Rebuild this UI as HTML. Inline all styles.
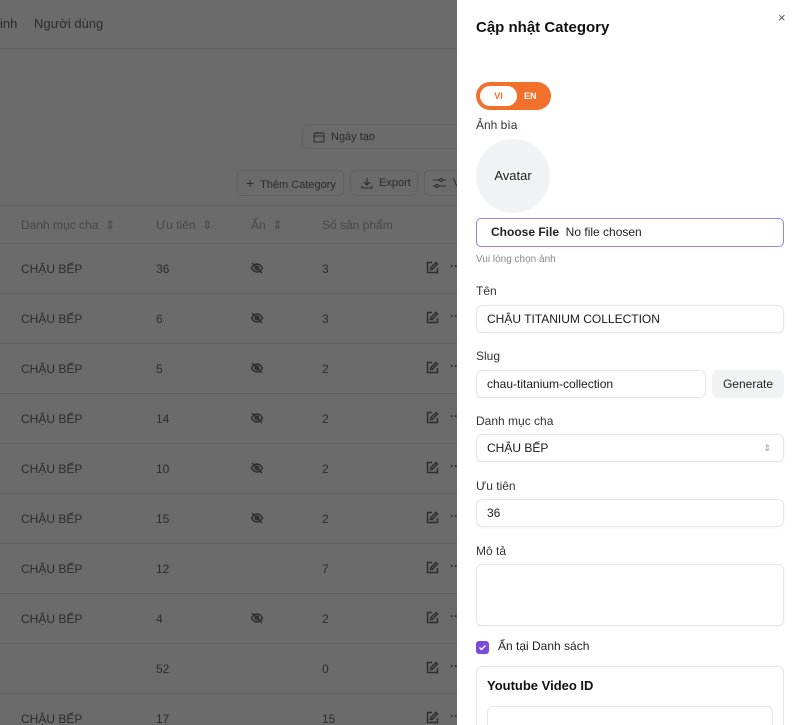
<!DOCTYPE html>
<html style="width:800px;height:725px;overflow:hidden"><head><meta charset="utf-8">
<style>
*{box-sizing:border-box;margin:0;padding:0}
body{width:800px;height:725px;overflow:hidden;background:#6b6b6b;font-family:"Liberation Sans",sans-serif;position:relative;font-size:12px;color:#2c2c2c}
.a{position:absolute}
.hl{position:absolute;left:0;width:457px;height:1px;background:#626262}
.th{color:#474747;font-size:12px}
.panel{position:absolute;left:457px;top:0;width:343px;height:725px;background:#fff;color:#222;overflow:hidden}
.lbl{position:absolute;left:19px;font-size:12px;color:#333}
.inp{position:absolute;left:19px;width:308px;height:28px;border:1px solid #e6e6e6;border-radius:6px;font-size:12px;padding-left:10px;line-height:26px;color:#1a1a1a;box-shadow:0 1px 2px rgba(0,0,0,.04)}
.btnd{position:absolute;height:26px;border:1px solid #626262;border-radius:5px;color:#2c2c2c;font-size:11px;line-height:24px;padding-left:8px}
</style></head><body>
<div class="a" style="left:0;top:16px;font-size:13px">inh</div>
<div class="a" style="left:34px;top:16px;font-size:13px">Người dùng</div>
<div class="hl" style="top:48px"></div>
<div class="btnd" style="left:302px;top:124px;width:160px;height:25px">
<svg class="a" style="left:10px;top:6px" width="12" height="12" viewBox="0 0 12 12" fill="none" stroke="#2c2c2c" stroke-width="1"><rect x="1" y="2" width="10" height="9" rx="1"/><path d="M1 5h10M4 1v2M8 1v2"/></svg>
<span style="margin-left:20px">Ngày tạo</span></div>
<div class="btnd" style="left:237px;top:170px;width:107px"><span style="font-size:14px">+</span>&nbsp; Thêm Category</div>
<div class="btnd" style="left:350px;top:170px;width:68px">
<svg class="a" style="left:10px;top:6px" width="12" height="12" viewBox="0 0 12 12" fill="none" stroke="#2c2c2c" stroke-width="1.1"><path d="M6 1v7M3 5l3 3 3-3M1 9v2h10V9"/></svg><span style="margin-left:20px">Export</span></div>
<div class="btnd" style="left:424px;top:170px;width:60px">
<svg class="a" style="left:8px;top:7px" width="13" height="11" viewBox="0 0 13 11" fill="none" stroke="#2c2c2c" stroke-width="1"><path d="M0 2h13M0 8h13"/><circle cx="8" cy="2" r="1.5" fill="#6b6b6b"/><circle cx="4" cy="8" r="1.5" fill="#6b6b6b"/></svg><span style="margin-left:20px">V</span></div>
<div class="hl" style="top:205px"></div>
<div class="a th" style="left:21px;top:218px">Danh mục cha &nbsp;⇕</div>
<div class="a th" style="left:156px;top:218px">Ưu tiên &nbsp;⇕</div>
<div class="a th" style="left:251px;top:218px">Ẩn &nbsp;⇕</div>
<div class="a th" style="left:322px;top:218px">Số sản phẩm</div>
<div class="hl" style="top:243px"></div>

<div id="rows"></div>
<script>
var d=[["CHẬU BẾP","36",1,"3"],["CHẬU BẾP","6",1,"3"],["CHẬU BẾP","5",1,"2"],["CHẬU BẾP","14",1,"2"],["CHẬU BẾP","10",1,"2"],["CHẬU BẾP","15",1,"2"],["CHẬU BẾP","12",0,"7"],["CHẬU BẾP","4",1,"2"],["","52",0,"0"],["CHẬU BẾP","17",0,"15"]];
var h="";
var eye='<svg width="14" height="14" viewBox="0 0 14 14" fill="none" stroke="#2c2c2c" stroke-width="1.4"><path d="M1.5 7c1.5-2.5 3.5-4 5.5-4s4 1.5 5.5 4c-1.5 2.5-3.5 4-5.5 4S3 9.5 1.5 7z"/><circle cx="7" cy="7" r="1.8"/><path d="M2 2l10 10"/></svg>';
var ed='<svg width="13" height="13" viewBox="0 0 13 13" fill="none" stroke="#2c2c2c" stroke-width="1.4"><path d="M6 1.5H1.5v10h10V7"/><path d="M10 1.5l1.5 1.5L6 8.5H4.5V7z"/></svg>';
for(var i=0;i<d.length;i++){var y=268+i*50;
h+='<div class="a" style="left:21px;top:'+(y-6)+'px">'+d[i][0]+'</div>';
h+='<div class="a" style="left:156px;top:'+(y-6)+'px">'+d[i][1]+'</div>';
if(d[i][2])h+='<div class="a" style="left:250px;top:'+(y-7)+'px">'+eye+'</div>';
h+='<div class="a" style="left:322px;top:'+(y-6)+'px">'+d[i][3]+'</div>';
h+='<div class="a" style="left:426px;top:'+(y-7)+'px">'+ed+'</div>';
h+='<div class="a" style="left:450px;top:'+(y-9)+'px;font-weight:bold">··</div>';
h+='<div class="hl" style="top:'+(y+25)+'px"></div>';}
document.getElementById("rows").innerHTML=h;
</script>

<div class="panel">
<div class="a" style="left:19px;top:19px;font-size:15px;font-weight:bold;color:#111">Cập nhật Category</div>
<div class="a" style="left:321px;top:10px;font-size:13px;color:#555">×</div>
<div class="a" style="left:19px;top:82px;width:75px;height:28px;border-radius:14px;background:#f0702c"></div>
<div class="a" style="left:23px;top:86px;width:37px;height:20px;border-radius:10px;background:#fff;color:#f0702c;font-size:9px;font-weight:bold;text-align:center;line-height:20px">VI</div>
<div class="a" style="left:67px;top:86px;color:#fff;font-size:9px;font-weight:bold;line-height:20px">EN</div>
<div class="lbl" style="top:118px">Ảnh bìa</div>
<div class="a" style="left:19px;top:139px;width:74px;height:74px;border-radius:50%;background:#f1f2f4;text-align:center;line-height:74px;font-size:13px;color:#222">Avatar</div>
<div class="a" style="left:19px;top:218px;width:308px;height:29px;border:1px solid #9b84c9;border-radius:5px;font-size:12px;line-height:27px;padding-left:14px;color:#222"><b style="font-weight:600">Choose File</b>&nbsp; No file chosen</div>
<div class="lbl" style="top:254px;font-size:10px;color:#888">Vui lòng chọn ảnh</div>
<div class="lbl" style="top:284px">Tên</div>
<div class="inp" style="top:305px">CHẬU TITANIUM COLLECTION</div>
<div class="lbl" style="top:349px">Slug</div>
<div class="inp" style="top:370px;width:230px">chau-titanium-collection</div>
<div class="a" style="left:255px;top:370px;width:72px;height:28px;border-radius:6px;background:#f1f2f4;text-align:center;line-height:28px;font-size:12px;color:#222">Generate</div>
<div class="lbl" style="top:414px">Danh mục cha</div>
<div class="inp" style="top:434px">CHẬU BẾP<span class="a" style="right:12px;top:0;font-size:9px;color:#999">⇕</span></div>
<div class="lbl" style="top:479px">Ưu tiên</div>
<div class="inp" style="top:499px">36</div>
<div class="lbl" style="top:544px">Mô tả</div>
<div class="inp" style="top:564px;height:62px"></div>
<div class="a" style="left:19px;top:641px;width:13px;height:13px;border-radius:3px;background:#7c4ad8"><svg width="13" height="13" viewBox="0 0 13 13" fill="none" stroke="#fff" stroke-width="1.4"><path d="M3.5 6.5l2 2 4-4"/></svg></div>
<div class="a" style="left:41px;top:639px;font-size:12px;color:#222">Ẩn tại Danh sách</div>
<div class="a" style="left:19px;top:666px;width:308px;height:70px;border:1px solid #e6e6e6;border-radius:6px"></div>
<div class="a" style="left:30px;top:678px;font-size:13px;font-weight:bold;color:#111">Youtube Video ID</div>
<div class="a" style="left:30px;top:706px;width:286px;height:28px;border:1px solid #e6e6e6;border-radius:6px"></div>
</div>
</body></html>
